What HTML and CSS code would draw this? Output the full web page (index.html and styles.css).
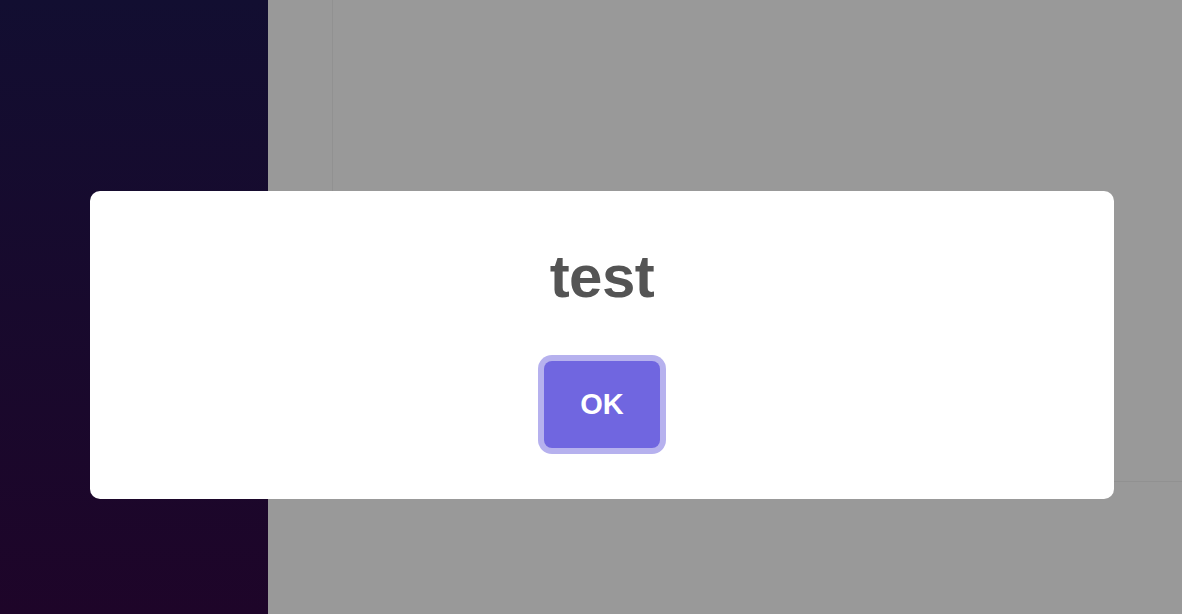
FILE: index.html
```html
<!DOCTYPE html>
<html lang="en">
<head>
<meta charset="utf-8">
<title>Alert</title>
<link rel="stylesheet" href="styles.css">
</head>
<body>
<div class="app">
  <aside class="sidebar"></aside>
  <main class="main">
    <div class="panel"></div>
  </main>
</div>
<div class="overlay">
  <div class="popup" role="dialog" aria-modal="true">
    <h2 class="popup-title">test</h2>
    <div class="popup-actions">
      <button class="btn-confirm" type="button">OK</button>
    </div>
  </div>
</div>
</body>
</html>
```

FILE: styles.css
```css
* { box-sizing: border-box; }

html, body {
  margin: 0;
  height: 100%;
}

body {
  font-family: "Liberation Sans", Arial, Helvetica, sans-serif;
  overflow: hidden;
}

.app {
  display: flex;
  height: 614px;
}

.sidebar {
  width: 268px;
  flex: none;
  background: linear-gradient(to bottom, #120e31 0%, #1e0529 100%);
}

.main {
  flex: 1;
  background: #999999;
  padding-left: 64px;
}

.panel {
  height: 482px;
  border-left: 1px solid #919191;
  border-bottom: 1px solid #919191;
}

.overlay {
  position: fixed;
  inset: 0;
  display: flex;
  align-items: flex-start;
  padding: 191px 0 0 90px;
}

.popup {
  width: 1024px;
  height: 308px;
  background: #ffffff;
  border-radius: 10px;
  padding-top: 50px;
  display: flex;
  flex-direction: column;
  align-items: center;
}

.popup-title {
  margin: 0;
  font-size: 60px;
  line-height: 72px;
  font-weight: 700;
  letter-spacing: -0.5px;
  color: #545454;
}

.popup-actions {
  margin-top: 48px;
  display: flex;
  justify-content: center;
}

.btn-confirm {
  font-family: inherit;
  font-size: 29px;
  font-weight: 700;
  line-height: 29px;
  color: #ffffff;
  background: #7066e0;
  border: none;
  border-radius: 8px;
  width: 116px;
  height: 87px;
  padding: 0;
  box-shadow: 0 0 0 6px #b6b1ee;
  cursor: pointer;
}
```
